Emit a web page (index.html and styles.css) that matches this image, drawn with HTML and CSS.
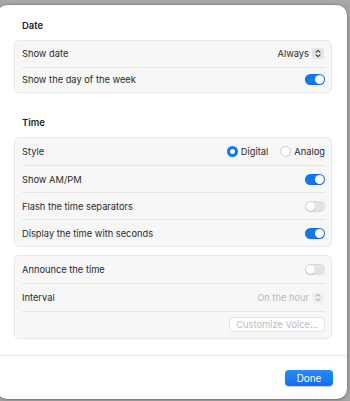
FILE: index.html
```html
<!DOCTYPE html>
<html lang="en">
<head>
  <meta charset="UTF-8" />
  <meta name="viewport" content="width=device-width, initial-scale=1.0"/>
  <title>Clock Options</title>
  <link rel="stylesheet" href="styles.css">
</head>
<body>
  <div class="sheet">
    <div class="sheet-body">

      <!-- Date -->
      <section class="section">
        <h2 class="section-title">Date</h2>
        <div class="group compact">
          <div class="row">
            <span class="label">Show date</span>
            <div class="popup">
              <span>Always</span>
              <svg class="stepper" width="12" height="11" viewBox="0 0 12 11">
                <rect x="0" y="0" width="12" height="11" rx="2.5" fill="#e4e4e4"/>
                <path d="M4 4.2 L6 2.4 L8 4.2 M4 6.8 L6 8.6 L8 6.8" fill="none" stroke="#3a3a3a" stroke-width="1.1" stroke-linecap="round" stroke-linejoin="round"/>
              </svg>
            </div>
          </div>
          <div class="row">
            <span class="label">Show the day of the week</span>
            <span class="toggle on"></span>
          </div>
        </div>
      </section>

      <!-- Time -->
      <section class="section">
        <h2 class="section-title">Time</h2>
        <div class="group">
          <div class="row">
            <span class="label">Style</span>
            <div class="radios">
              <label class="radio checked"><span class="dot"></span>Digital</label>
              <label class="radio"><span class="dot"></span>Analog</label>
            </div>
          </div>
          <div class="row">
            <span class="label">Show AM/PM</span>
            <span class="toggle on"></span>
          </div>
          <div class="row">
            <span class="label">Flash the time separators</span>
            <span class="toggle"></span>
          </div>
          <div class="row">
            <span class="label">Display the time with seconds</span>
            <span class="toggle on"></span>
          </div>
        </div>

        <div class="group announce">
          <div class="row">
            <span class="label">Announce the time</span>
            <span class="toggle"></span>
          </div>
          <div class="row">
            <span class="label">Interval</span>
            <div class="popup disabled">
              <span>On the hour</span>
              <svg class="stepper" width="12" height="11" viewBox="0 0 12 11">
                <rect x="0" y="0" width="12" height="11" rx="2.5" fill="#efefef"/>
                <path d="M4 4.2 L6 2.4 L8 4.2 M4 6.8 L6 8.6 L8 6.8" fill="none" stroke="#b4b4b4" stroke-width="1.1" stroke-linecap="round" stroke-linejoin="round"/>
              </svg>
            </div>
          </div>
          <div class="row end">
            <button class="btn" disabled>Customize Voice...</button>
          </div>
        </div>
      </section>

    </div>
    <div class="sheet-footer">
      <button class="btn-primary">Done</button>
    </div>
  </div>
</body>
</html>
```

FILE: styles.css
```css
* {
  box-sizing: border-box;
  margin: 0;
  padding: 0;
}

body {
  background: #a9a9a9;
  font-family: 'Inter', 'Liberation Sans', sans-serif;
  font-size: 9.3px;
  color: #2a2a2a;
  overflow: hidden;
  height: 401px;
}

.sheet {
  margin: 5px 0 0 -3px;
  width: 350px;
  height: 394px;
  background: #ffffff;
  border-radius: 10px;
  box-shadow: 0 0 0 0.5px rgba(0,0,0,0.25), 0 2px 8px rgba(0,0,0,0.2);
  display: flex;
  flex-direction: column;
}

.sheet-body {
  padding: 14px 15px 16px 17px;
}

.section + .section {
  margin-top: 23px;
}

.section-title {
  font-size: 9.5px;
  font-weight: 600;
  line-height: 14px;
  margin-bottom: 7px;
  padding-left: 8px;
  color: #1f1f1f;
}

.group {
  background: #f7f7f7;
  border: 1px solid #e8e8e8;
  border-radius: 5px;
}

.group + .group {
  margin-top: 8px;
}

.row {
  display: flex;
  align-items: center;
  justify-content: space-between;
  height: 27px;
  margin: 0 6px 0 7px;
  border-top: 1px solid #e6e6e6;
}

.row:first-child {
  border-top: none;
}

.compact .row {
  height: 25.5px;
}

.announce .row {
  height: 27.4px;
}

.row.end {
  justify-content: flex-end;
}

.label {
  white-space: nowrap;
}

/* popup button */
.popup {
  display: flex;
  align-items: center;
  gap: 3px;
  margin-right: 1px;
}

.popup.disabled {
  color: #b9b9b9;
}

.stepper {
  display: block;
}

/* switches */
.toggle {
  width: 20px;
  height: 11px;
  border-radius: 6px;
  background: #e3e3e3;
  position: relative;
  box-shadow: inset 0 0 0 0.5px rgba(0,0,0,0.06);
}

.toggle::after {
  content: '';
  position: absolute;
  top: 1px;
  left: 1px;
  width: 9px;
  height: 9px;
  border-radius: 50%;
  background: #ffffff;
  box-shadow: 0 0.5px 1px rgba(0,0,0,0.25);
}

.toggle.on {
  background: #0f76f5;
}

.toggle.on::after {
  left: 10px;
}

/* radios */
.radios {
  display: flex;
  gap: 12px;
}

.radio {
  display: flex;
  align-items: center;
  gap: 3px;
}

.radio .dot {
  width: 11px;
  height: 11px;
  border-radius: 50%;
  background: #ffffff;
  border: 1px solid #cdcdcd;
}

.radio.checked .dot {
  border: 3.5px solid #0f76f5;
  background: #ffffff;
}

/* buttons */
.btn {
  font: inherit;
  height: 15px;
  padding: 0 6px;
  background: #ffffff;
  color: #bdbdbd;
  border: 1px solid #e3e3e3;
  border-radius: 4px;
}

.sheet-footer {
  margin-top: auto;
  border-top: 1px solid #e9e9e9;
  padding: 14px 14px 13px 0;
  display: flex;
  justify-content: flex-end;
}

.btn-primary {
  font: inherit;
  font-size: 9.8px;
  width: 48px;
  height: 16px;
  border: none;
  border-radius: 4px;
  color: #ffffff;
  background: linear-gradient(#2a8bfb, #0b70f3);
  box-shadow: 0 0.5px 1px rgba(0,0,0,0.2);
}
```
